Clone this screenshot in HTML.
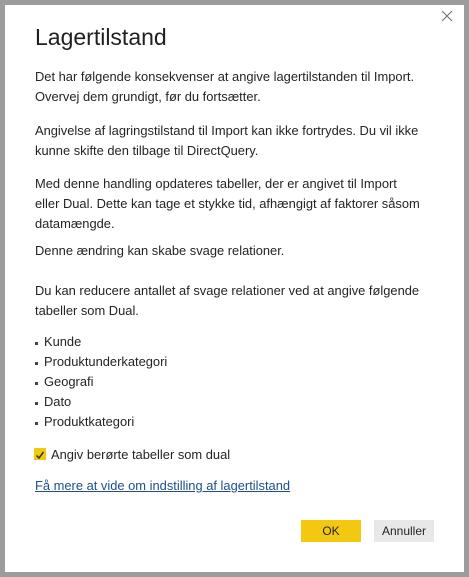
<!DOCTYPE html><html><head><style>
body{margin:0;width:469px;height:577px;background:#9c9c9c;font-family:"Liberation Sans",sans-serif;color:#252423;overflow:hidden}
.d{position:absolute;left:5px;top:5px;width:459px;height:567px;background:#fff}
.t{position:absolute;left:35px;top:24px;font-size:23px;color:#1f1f1f}
.p{position:absolute;left:35px;font-size:12.9px;line-height:20px;margin:0}
.b{position:absolute;left:44px;font-size:12.9px}
.b:before{content:"";position:absolute;left:-9px;top:8px;width:3px;height:3px;background:#444}
.btn{position:absolute;top:520px;height:22px;width:60px;font-size:12px;text-align:center;line-height:22px}
</style></head><body><div class="d"></div>
<svg style="position:absolute;left:441px;top:10px" width="12" height="12"><path d="M1 1L11 11M11 1L1 11" stroke="#777" stroke-width="1.2"/></svg>
<div class="t">Lagertilstand</div>
<p class="p" style="top:67px">Det har følgende konsekvenser at angive lagertilstanden til Import.<br>Overvej dem grundigt, før du fortsætter.</p>
<p class="p" style="top:121px">Angivelse af lagringstilstand til Import kan ikke fortrydes. Du vil ikke<br>kunne skifte den tilbage til DirectQuery.</p>
<p class="p" style="top:174px">Med denne handling opdateres tabeller, der er angivet til Import<br>eller Dual. Dette kan tage et stykke tid, afhængigt af faktorer såsom<br>datamængde.</p>
<p class="p" style="top:241px">Denne ændring kan skabe svage relationer.</p>
<p class="p" style="top:281px">Du kan reducere antallet af svage relationer ved at angive følgende<br>tabeller som Dual.</p>
<div class="b" style="top:334px">Kunde</div>
<div class="b" style="top:354px">Produktunderkategori</div>
<div class="b" style="top:374px">Geografi</div>
<div class="b" style="top:394px">Dato</div>
<div class="b" style="top:414px">Produktkategori</div>
<div style="position:absolute;left:34px;top:448px;width:12px;height:12px;background:#f2c811"><svg width="12" height="12"><path d="M2.5 6.5l2.5 2.5 4.5-6" stroke="#333" stroke-width="1.5" fill="none"/></svg></div>
<div class="p" style="top:445px;left:51px">Angiv berørte tabeller som dual</div>
<div class="p" style="top:476px;color:#1e4e8c;text-decoration:underline">Få mere at vide om indstilling af lagertilstand</div>
<div class="btn" style="left:301px;background:#f2c811">OK</div>
<div class="btn" style="left:374px;background:#e8e8e8">Annuller</div>
</body></html>
